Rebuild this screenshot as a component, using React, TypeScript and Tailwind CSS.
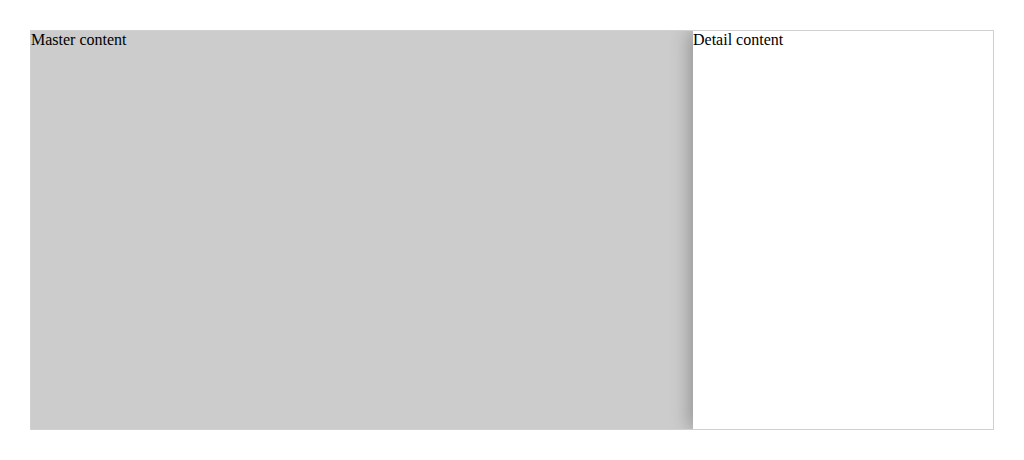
import React from "react";

export default function App() {
  return (
    <div className="bg-white w-[1024px] h-[460px] pt-[30px] px-[30px] font-['Liberation_Serif',serif] text-base text-black">
      <div className="flex h-[400px] w-[964px] border border-[#d0d0d0] overflow-hidden">
        <div className="flex-1 bg-[#cccccc] leading-[18px]">Master content</div>
        <div className="relative w-[300px] bg-white leading-[18px] shadow-[-3px_0_18px_rgba(0,0,0,0.3)]">Detail content</div>
      </div>
    </div>
  );
}
